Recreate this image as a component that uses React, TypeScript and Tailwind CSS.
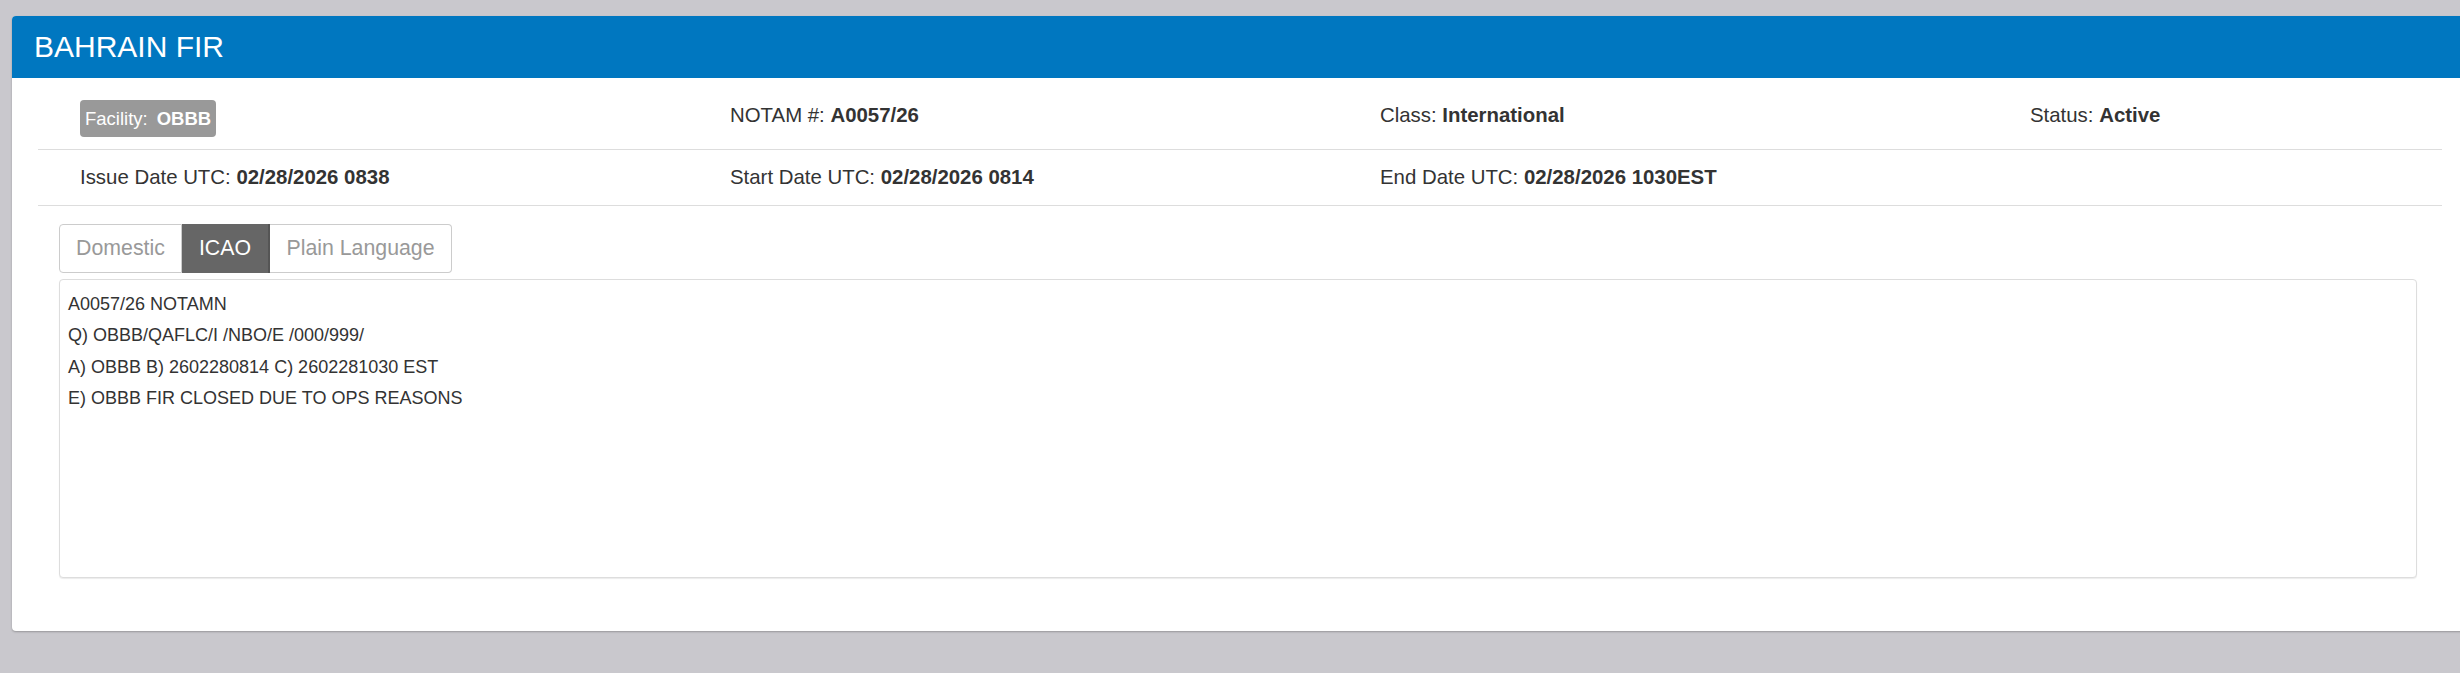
import React from "react";

const lines = [
  "A0057/26 NOTAMN",
  "Q) OBBB/QAFLC/I /NBO/E /000/999/",
  "A) OBBB B) 2602280814 C) 2602281030 EST",
  "E) OBBB FIR CLOSED DUE TO OPS REASONS",
];

function Field({ label, value }: { label: string; value: string }) {
  return (
    <div className="text-[20.4px] leading-[30px] text-[#333] whitespace-nowrap">
      {label} <span className="font-bold">{value}</span>
    </div>
  );
}

export default function App() {
  return (
    <div className="w-[2460px] h-[673px] overflow-hidden bg-[#c9c8cd] pt-[16px] pl-[12px] font-['Liberation_Sans',Arial,sans-serif]">
      <div className="w-[2456px] h-[615px] rounded-[4px] bg-white overflow-hidden shadow-[0_1px_2px_rgba(0,0,0,0.25)]">
        <div className="h-[62px] bg-[#0077c0] pl-[22px] pt-[14px]">
          <h3 className="text-[30px] leading-[33px] text-white font-normal whitespace-nowrap">BAHRAIN FIR</h3>
        </div>
        <div className="pl-[26px]">
          <div className="w-[2404px]">
            <div className="grid grid-cols-[650px_650px_650px_1fr] pl-[42px] pt-[22px] pb-[12px] border-b border-[#dddddd] items-start">
              <div>
                <span className="inline-flex items-center h-[37px] px-[5px] rounded-[4px] bg-[#999999] text-white text-[18.5px] whitespace-nowrap">
                  <span>Facility:</span>
                  <span className="font-bold ml-[9px]">OBBB</span>
                </span>
              </div>
              <Field label="NOTAM #:" value="A0057/26" />
              <Field label="Class:" value="International" />
              <Field label="Status:" value="Active" />
            </div>
            <div className="grid grid-cols-[650px_650px_650px_1fr] pl-[42px] pt-[12px] pb-[13px] border-b border-[#dddddd]">
              <Field label="Issue Date UTC:" value="02/28/2026 0838" />
              <Field label="Start Date UTC:" value="02/28/2026 0814" />
              <Field label="End Date UTC:" value="02/28/2026 1030EST" />
              <div />
            </div>
          </div>
          <div className="pl-[21px] pt-[18px]">
            <div className="flex h-[49px] text-[21.3px]">
              <button className="w-[123px] h-full border border-[#cccccc] rounded-l-[4px] bg-white text-[#999999]">
                Domestic
              </button>
              <button className="w-[88px] h-full bg-[#666666] text-white border-r-2 border-[#555555]">
                ICAO
              </button>
              <button className="w-[182px] h-full border border-l-0 border-[#cccccc] rounded-r-[4px] bg-white text-[#999999]">
                Plain Language
              </button>
            </div>
            <div className="mt-[6px] w-[2358px] h-[299px] border border-[#dddddd] rounded-[4px] bg-white shadow-[0_1px_1px_rgba(0,0,0,0.08)] pl-[8px] pt-[9px]">
              {lines.map((l) => (
                <div key={l} className="text-[18px] leading-[31.3px] text-[#333] whitespace-pre">
                  {l}
                </div>
              ))}
            </div>
          </div>
        </div>
      </div>
    </div>
  );
}
